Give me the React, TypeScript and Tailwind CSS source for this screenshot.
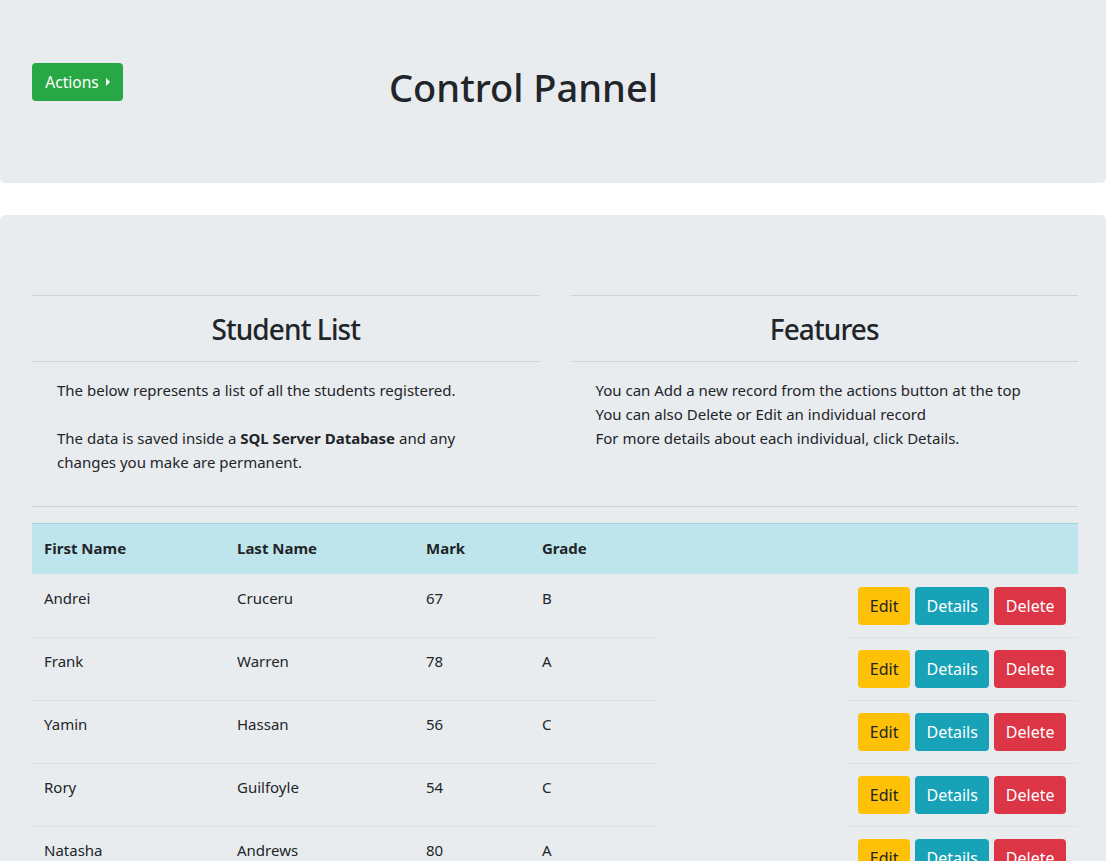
import React from "react";

const rows = [
  { first: "Andrei", last: "Cruceru", mark: 67, grade: "B" },
  { first: "Frank", last: "Warren", mark: 78, grade: "A" },
  { first: "Yamin", last: "Hassan", mark: 56, grade: "C" },
  { first: "Rory", last: "Guilfoyle", mark: 54, grade: "C" },
  { first: "Natasha", last: "Andrews", mark: 80, grade: "A" },
  { first: "John", last: "Smith", mark: 71, grade: "B" },
];

function Btn({ children, cls }: { children: React.ReactNode; cls: string }) {
  return (
    <button
      className={
        "h-[38px] px-[11.5px] rounded-[4px] text-[16px] leading-[24px] " + cls
      }
    >
      {children}
    </button>
  );
}

export default function App() {
  return (
    <div
      className="bg-white text-[#212529] text-[15px] leading-[24px]"
      style={{ fontFamily: '"Noto Sans", "Open Sans", sans-serif' }}
    >
      {/* top jumbotron */}
      <div className="bg-[#e9ecef] rounded-b-[5px] pl-8 pr-[28px] pt-[63px] pb-[64px] mb-8">
        <div className="flex items-start">
          <button className="bg-[#28a745] text-white text-[15.5px] h-[38px] w-[91px] rounded-[4px] flex items-center justify-center gap-[7px]">
            <span>Actions</span>
            <span className="inline-block w-0 h-0 border-y-[4.5px] border-y-transparent border-l-[4.5px] border-l-white" />
          </button>
          <div className="w-[801px] text-center">
            <h1 className="text-[38px] leading-[48px] font-medium mb-2">
              Control Pannel
            </h1>
          </div>
        </div>
      </div>

      {/* main jumbotron */}
      <div className="bg-[#e9ecef] rounded-t-[5px] pl-8 pr-[28px] pt-16 pb-16">
        <div className="grid grid-cols-2 gap-x-[31px]">
          <div>
            <div className="mt-4 border-t border-black/10" />
            <div className="h-[65px] flex items-center justify-center">
              <h2 className="text-[28px] leading-[38px] font-medium tracking-[-0.9px]">Student List</h2>
            </div>
            <div className="border-t border-black/10" />
            <p className="mt-4 pl-[25px]">
              The below represents a list of all the students registered.
              <br />
              <br />
              The data is saved inside a <b>SQL Server Database</b> and any
              <br />
              changes you make are permanent.
            </p>
          </div>
          <div>
            <div className="mt-4 border-t border-black/10" />
            <div className="h-[65px] flex items-center justify-center">
              <h2 className="text-[28px] leading-[38px] font-medium tracking-[-0.9px]">Features</h2>
            </div>
            <div className="border-t border-black/10" />
            <p className="mt-4 pl-[25px]">
              You can Add a new record from the actions button at the top
              <br />
              You can also Delete or Edit an individual record
              <br />
              For more details about each individual, click Details.
            </p>
          </div>
        </div>

        <div className="mt-8 border-t border-black/10" />

        <table className="mt-4 w-full table-fixed border-separate border-spacing-0">
          <colgroup>
            <col className="w-[193px]" />
            <col className="w-[189px]" />
            <col className="w-[116px]" />
            <col className="w-[126px]" />
            <col className="w-[192px]" />
            <col className="w-[230px]" />
          </colgroup>
          <thead>
            <tr className="bg-[#bee5eb]">
              {["First Name", "Last Name", "Mark", "Grade", "", ""].map((h, i) => (
                <th
                  key={i}
                  className="text-left font-bold px-3 py-3 border-t border-t-[#9fd3db] border-b-2 border-b-[#bee5eb]"
                >
                  {h}
                </th>
              ))}
            </tr>
          </thead>
          <tbody>
            {rows.map((r, i) => {
              const b = i === 0 ? "border-t border-t-transparent" : "border-t border-t-[#dde1e5]";
              return (
                <tr key={i}>
                  <td className={"align-top px-3 pt-[11px] pb-3 " + b}>{r.first}</td>
                  <td className={"align-top px-3 pt-[11px] pb-3 " + b}>{r.last}</td>
                  <td className={"align-top px-3 pt-[11px] pb-3 " + b}>{r.mark}</td>
                  <td className={"align-top px-3 pt-[11px] pb-3 " + b}>{r.grade}</td>
                  <td className="align-top px-3 py-3 border-t border-t-transparent"></td>
                  <td className={"align-top px-3 py-3 " + b}>
                    <div className="flex justify-end gap-[5px]">
                      <Btn cls="bg-[#ffc107] text-[#212529]">Edit</Btn>
                      <Btn cls="bg-[#17a2b8] text-white">Details</Btn>
                      <Btn cls="bg-[#dc3545] text-white">Delete</Btn>
                    </div>
                  </td>
                </tr>
              );
            })}
          </tbody>
        </table>
      </div>
    </div>
  );
}
